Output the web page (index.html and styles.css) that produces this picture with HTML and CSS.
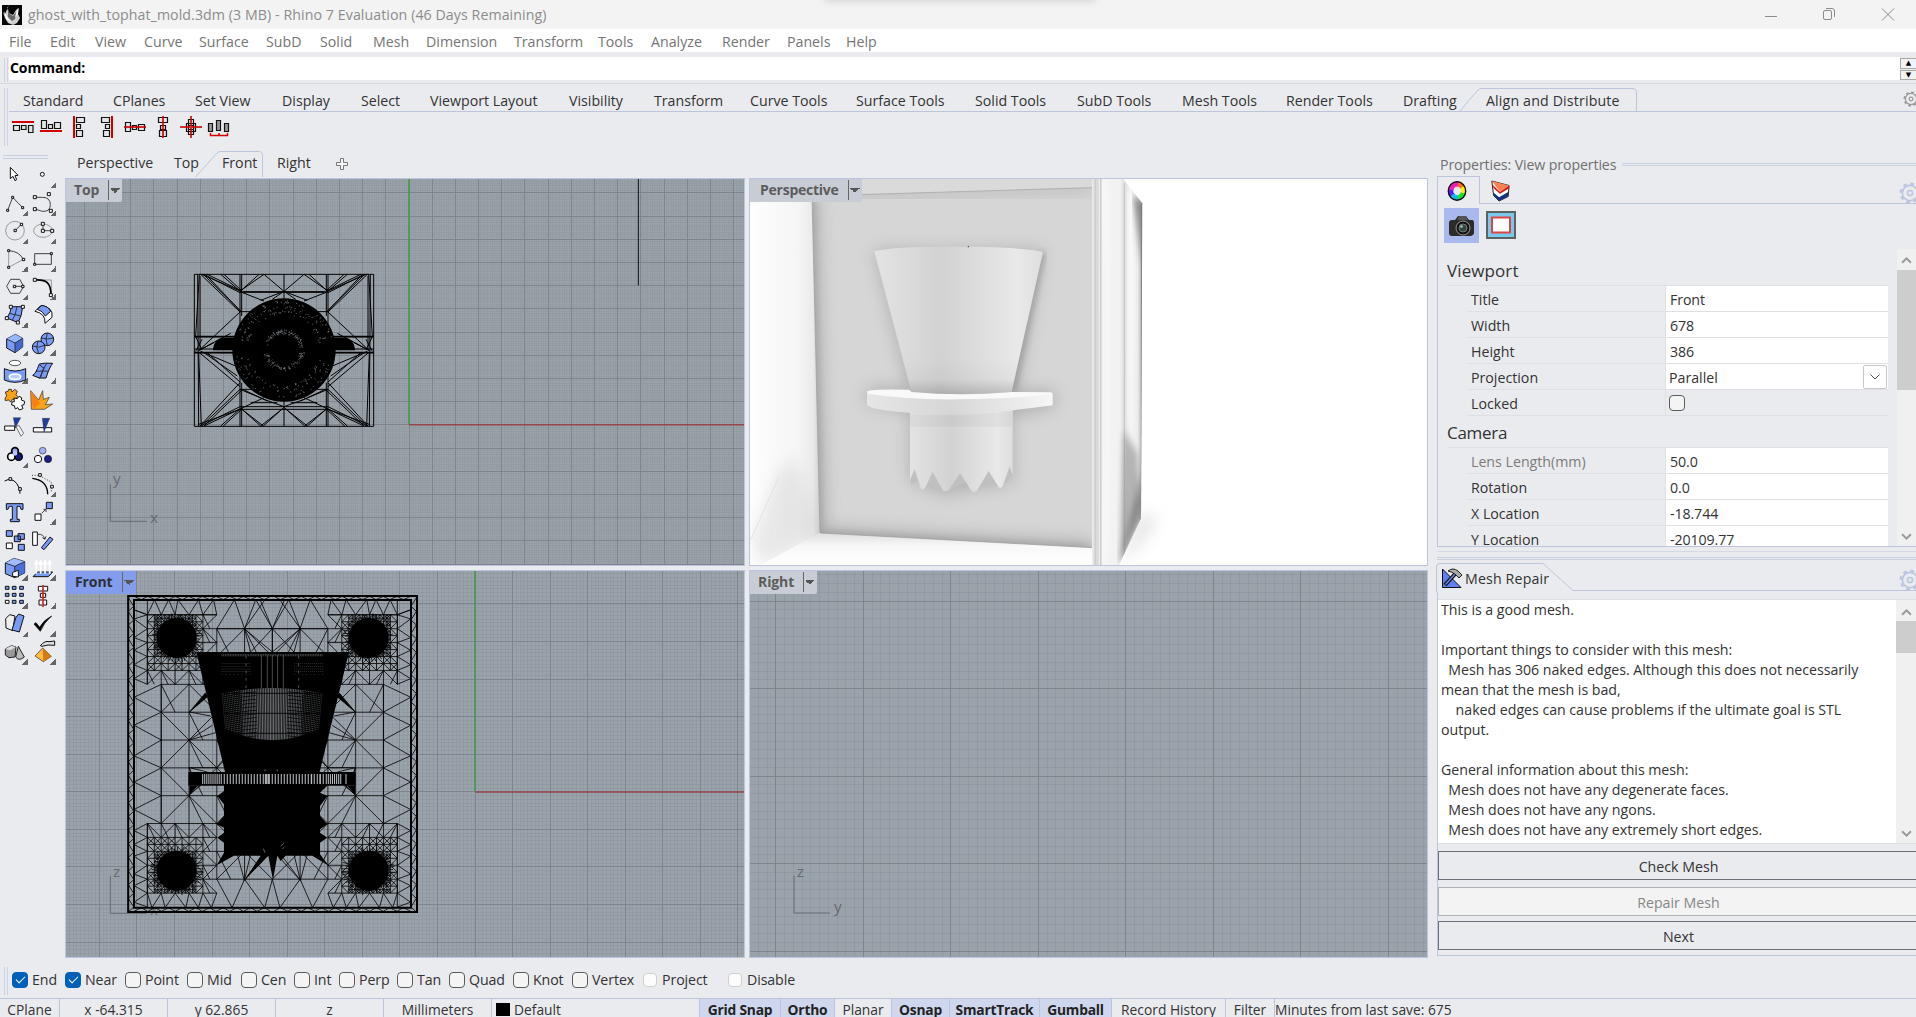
FILE: index.html
```html
<!DOCTYPE html>
<html lang="en">
<head>
<meta charset="utf-8">
<title>ghost_with_tophat_mold.3dm</title>
<link rel="stylesheet" href="styles.css">
</head>
<body>
<header class="titlebar">
  <svg class="app-icon" viewBox="0 0 20 20"><rect width="20" height="20" fill="#050505"/><path d="M7 0l-2 3 2 5 4 2 3-5 3-2-1 6 2 4-3 5-4 2-5-2-3-5-2-6 2 2z" fill="#cfcfcf"/><path d="M6 4l2 5 3 2 3-4-1 7-3 2-4-4z" fill="#666"/><path d="M2 6l3 6 5 6-6-4zM16 3l0 6-3 3z" fill="#fff"/><path d="M12 0h5l-4 5z" fill="#050505"/></svg>
  <span class="title">ghost_with_tophat_mold.3dm (3 MB) - Rhino 7 Evaluation (46 Days Remaining)</span>
  <div class="notch"></div>
  <svg class="winctl" viewBox="0 0 146 29" fill="none" stroke="#8b8b8b"><path d="M5 16.500h12M122 8.500l12 12M134 8.500l-12 12"/><rect x="63.500" y="10.500" width="8" height="9" rx="1.500"/><path d="M66 8.500h6q2.500 0 2.500 2.500v6"/></svg>
</header>
<nav class="menu"><span>File</span><span>Edit</span><span>View</span><span>Curve</span><span>Surface</span><span>SubD</span><span>Solid</span><span>Mesh</span><span>Dimension</span><span>Transform</span><span>Tools</span><span>Analyze</span><span>Render</span><span>Panels</span><span>Help</span></nav>
<div class="command"><i class="grip"></i><div class="prompt">Command:</div>
  <div class="spin"><b>▲</b><b>▼</b></div></div>
<section class="toolbar">
  <i class="grip tall"></i>
  <div class="tb-main">
    <div class="tb-tabs"><span>Standard</span><span>CPlanes</span><span>Set View</span><span>Display</span><span>Select</span><span>Viewport Layout</span><span>Visibility</span><span>Transform</span><span>Curve Tools</span><span>Surface Tools</span><span>Solid Tools</span><span>SubD Tools</span><span>Mesh Tools</span><span>Render Tools</span><span>Drafting</span><span class="active"><svg viewBox="0 0 178 25" fill="none" stroke="#bcc5dc"><path d="M0 24L19 2Q20.500 .5 23 .5H174Q177.500 .5 177.500 4V24"/></svg>Align and Distribute</span>
      <svg class="gear" viewBox="0 0 20 20"><use href="#gear"/></svg></div>
    <div class="tb-icons">
      <svg viewBox="11 115 28 24"><path class="rd" d="M12 122h22"/><path class="bx" d="M13.500 125.500h6v5h-6zM21.500 125.500h4.500v4h-4.500zM28.500 125.500h4.500v7h-4.500z"/></svg>
      <svg viewBox="39 115 28 24"><path class="rd" d="M40 131h22"/><path class="bx" d="M41.500 120.500h5v8h-5zM48.500 124.500h4v4h-4zM54.500 122.500h6v6h-6z"/></svg>
      <svg viewBox="67 115 28 24"><path class="rd" d="M74 116v22"/><path class="bx" d="M76.500 117.500h8v5h-8zM76.500 124.500h4v4h-4zM76.500 130.500h6v6h-6z"/></svg>
      <svg viewBox="95 115 28 24"><path class="rd" d="M112 116v22"/><path class="bx" d="M101.500 117.500h8v5h-8zM105.500 124.500h4v4h-4zM103.500 130.500h6v6h-6z"/></svg>
      <svg viewBox="123 115 28 24"><path class="bx" d="M125.500 122.500h5v9h-5zM132.500 125.500h4v4h-4zM138.500 124.500h6v6h-6z"/><path class="rd o" d="M124 127h22"/></svg>
      <svg viewBox="151 115 28 24"><path class="bx" d="M158.500 117.500h9v5h-9zM160.500 125.500h5v4h-5zM159.500 130.500h7v6h-7z"/><path class="rd o" d="M163 116v22"/></svg>
      <svg viewBox="179 115 28 24"><path class="bx" d="M188.500 119.500h5v15h-5zM186.500 123.500h9v8h-9zM188.500 125.500h5v4h-5z"/><path class="rd o" d="M180 127h22M191 116v22"/></svg>
      <svg viewBox="207 115 28 24"><path class="bx g" d="M208.500 123.500h4v8h-4zM216.500 120.500h4v10h-4zM224.500 123.500h4v8h-4z"/><path d="M210.500 133v2.500h17v-2.500M219 133v2" stroke="#d00000" stroke-width="1.500" fill="none"/></svg>
    </div>
  </div>
</section>
<main class="work">
  <aside class="palette">
    <div class="hgrip"></div>
    <div class="tools">
      <svg class="t" viewBox="3 30 84 84"><path d="M31 52v34l8-7 6 13 5-3-5-12 9-1z" class="w"/></svg>
      <svg class="t f" viewBox="87 30 84 84"><circle cx="127" cy="73" r="6" class="w"/></svg>
      <svg class="t f" viewBox="3 114 84 84"><path d="M23 181L38 142 68 173" class="l"/><path d="M20 178h6v6h-6zM35 139h6v6h-6zM65 170h6v6h-6z" class="w"/></svg>
      <svg class="t f" viewBox="87 114 84 84"><path d="M105 142h22q24 0 24 22t-24 20l-22-7" class="l"/><path d="M100 137h9v9h-9zM142 128h9v9h-9zM100 173h9v9h-9zM148 178h9v9h-9z" class="w"/></svg>
      <svg class="t f" viewBox="3 198 84 84"><circle cx="45" cy="242" r="28" class="l g"/><path d="M45 242l19-19" class="l"/><path d="M42 238h7v7h-7zM61 220h7v7h-7z" class="w"/></svg>
      <svg class="t f" viewBox="87 198 84 84"><ellipse cx="129" cy="242" rx="28" ry="20" class="l g"/><path d="M129 222v20h26" class="l"/><path d="M124 217h9v9h-9zM124 238h9v9h-9zM152 238h9v9h-9z" class="w"/></svg>
      <svg class="t f" viewBox="3 282 84 84"><path d="M26 302q32 2 44 26" class="l"/><path d="M26 302v50l44-24" class="l g"/><path d="M23 299h6v6h-6zM23 349h6v6h-6zM67 325h7v7h-7z" class="w"/></svg>
      <svg class="t f" viewBox="87 282 84 84"><path d="M104 311h50v32h-50z" class="l"/><path d="M151 308h6v6h-6zM101 340h6v6h-6z" class="w"/></svg>
      <svg class="t f" viewBox="3 366 84 84"><path d="M20 409l12-21h27l12 21-12 21H32z" class="l"/><path d="M43 409h25" class="l"/><path d="M40 406h7v7h-7zM65 406h7v7h-7z" class="w"/></svg>
      <svg class="t f" viewBox="87 366 84 84"><path d="M105 390h49v46" class="l g"/><path d="M105 390c36-2 48 10 48 46" fill="none" stroke="#000" stroke-width="5"/><path d="M100 385h9v9h-9zM148 431h9v9h-9z" class="w"/></svg>
      <svg class="t f" viewBox="3 450 84 84"><path d="M34 470h34q-2 28-14 48L21 504q12-18 13-34z" class="b"/><path d="M51 470q-4 26-14 41M27 490l36 8" class="l"/><path d="M28 466h9v9h-9zM64 466h9v9h-9zM16 500h9v9h-9zM49 513h9v9h-9z" class="w"/></svg>
      <svg class="t f" viewBox="87 450 84 84"><path d="M105 484l18-18q38 6 33 36l-21 18q2-30-30-36z" class="w"/><path d="M112 478l14-12q20 4 26 18l-16 14q-8-16-24-20z" class="b"/></svg>
      <svg class="t f" viewBox="3 534 84 84"><path d="M20 567l26-14 22 12v26l-23 17-25-14z" class="b"/><path d="M20 567l25 12 23-14-22-12z" fill="#98b6ff"/><path d="M45 579l23-14v26l-23 17z" fill="#4468cc"/><path d="M20 567l25 12 23-14M45 579v29" class="l"/></svg>
      <svg class="t f" viewBox="87 534 84 84"><circle cx="142" cy="568" r="19" class="b"/><circle cx="116" cy="592" r="19" class="b"/><path d="M98 588q18 8 36-2M114 573q-8 18 2 38M124 564q18 6 36 0M142 549q-8 18 0 38" class="l" stroke-width="2"/></svg>
      <svg class="t f" viewBox="3 618 84 84"><ellipse cx="45" cy="639" rx="17" ry="8" fill="#fff" stroke="#555" stroke-width="3"/><path d="M13 656q32 14 64 0v34q-32 14-64 0z" class="b"/><ellipse cx="45" cy="680" rx="17" ry="8" fill="#b8ccff" stroke="#fff" stroke-width="5"/></svg>
      <svg class="t f" viewBox="87 618 84 84"><path d="M98 676q8-2 20-34 16-4 40-2-10 12-20 44-20 4-40-8z" class="b"/><path d="M118 642q4 8 14 12l-14 32M108 664q24-2 38 0M140 640q-14 20-18 42" class="l" stroke-width="2"/></svg>
      <svg class="t" viewBox="3 702 84 84"><path d="M16 726l8-2 2-6 8 0 2 8 8-8 8 6-4 10 5 6-8 10-8-2-4 8-8-6-9 2-1-8 5-6z" fill="#f4a11c" stroke="#000" stroke-width="2"/><path d="M42 744l10 2 5-7 8 4-1 7 10 4-2 10-7 2 4 10-11 4-5-7-7 4-3-10-8-2 1-9 7-1z" class="w"/></svg>
      <svg class="t" viewBox="87 702 84 84"><path d="M92 722l24 28 12-28 2 26 18-6-12 22 22-2-24 16H94z" fill="#f5a31c" stroke="#333" stroke-width="2"/><path d="M92 722l8 56 20-18z" fill="#fb7f11"/></svg>
      <svg class="t" viewBox="3 36 84 84"><path d="M14 78h30v13H14z" class="w"/><path d="M40 53h22L46 84z" fill="#1f3f9c" stroke="#111"/><path d="M48 80l9-4 14 24-8 9z" fill="#eee" stroke="#777" stroke-width="3"/></svg>
      <svg class="t" viewBox="87 36 84 84"><path d="M100 83h55v13h-55z" class="w"/><path d="M127 55h22l-17 41z" fill="#1f3f9c" stroke="#111"/></svg>
      <svg class="t f" viewBox="3 120 84 84"><circle cx="45" cy="153" r="10" fill="#9aa8f0" stroke="#000" stroke-width="5"/><circle cx="34" cy="170" r="11" fill="#fff" stroke="#000" stroke-width="5"/><circle cx="56" cy="170" r="11" fill="#171a78" stroke="#000" stroke-width="4"/><circle cx="45" cy="160" r="7" fill="#b9c5ff"/></svg>
      <svg class="t" viewBox="87 120 84 84"><circle cx="128" cy="152" r="10" fill="#a5b1f5" stroke="#333" stroke-width="2"/><circle cx="114" cy="177" r="11" class="w"/><circle cx="144" cy="177" r="11" fill="#1b1f86" stroke="#222" stroke-width="2"/></svg>
      <svg class="t" viewBox="3 204 84 84"><path d="M14 240q20-12 36 7 12 16 10 31" fill="none" stroke="#000" stroke-width="3"/><path d="M27 230h8v8h-8zM56 260h8v8h-8z" class="w"/></svg>
      <svg class="t f" viewBox="87 204 84 84"><path d="M97 232q46 6 46 48" fill="none" stroke="#000" stroke-width="4"/><path d="M96 223h20l38 20v28" class="l" stroke-dasharray="3 5"/><path d="M116 218h8v8h-8zM152 253h8v8h-8z" class="w"/></svg>
      <svg class="t" viewBox="3 288 84 84"><path d="M19 308h50v17h-6l-3-9h-9v39h7v7H31v-7h6v-39h-9l-4 9h-5z" class="b"/></svg>
      <svg class="t f" viewBox="87 288 84 84"><path d="M105 339h18v19h-18z" class="w"/><path d="M139 304h18v19h-18z" class="b"/><path d="M125 337l12-12M130 325h8v8" class="l"/></svg>
      <svg class="t" viewBox="3 372 84 84"><path d="M19 389h18v17H19zM54 398h19v17H54zM43 405h18v17H43zM55 430h18v18H55z" class="b"/><path d="M19 426h18v17H19z" class="w"/></svg>
      <svg class="t" viewBox="87 372 84 84"><path d="M98 393h14v40H98z" class="w"/><path d="M124 440l26-32 9 7-27 31z" class="b"/><path d="M114 400q16-2 20 14M127 410l8 5 3-9" class="l"/></svg>
      <svg class="t f" viewBox="3 456 84 84"><path d="M16 486l26-14 32 10v34l-30 14-28-12z" class="b"/><path d="M16 486l26-14 32 10-30 14z" fill="#a0bcff"/><path d="M44 496l30-14v34l-30 14z" fill="#4a70d6"/><path d="M16 486l28 10 30-14M44 496v34" class="l"/><path d="M38 514l17-6v20l-17-2z" class="w"/></svg>
      <svg class="t f" viewBox="87 456 84 84"><path d="M99 527l14-14h45l-13 14z" class="b"/><path d="M109 518v-32M122 518v-32M135 518v-32M149 518v-32M104 490l5-9 5 9M117 490l5-9 5 9M130 490l5-9 5 9M144 490l5-9 5 9" stroke="#fff" stroke-width="5" fill="none"/></svg>
      <svg class="t f" viewBox="3 540 84 84"><path d="M16 556h11v9H16zM37 556h11v9H37zM59 556h11v9H59zM16 577h11v9H16zM37 577h11v9H37zM59 577h11v9H59zM37 598h11v9H37zM59 598h11v9H59z" class="b"/><path d="M16 598h11v9H16z" class="w"/></svg>
      <svg class="t f" viewBox="87 540 84 84"><path d="M115 556h28v14h-28zM121 577h16v12h-16zM117 597h23v15h-23z" class="w"/><path d="M129 552v66" stroke="#d22" stroke-width="5"/></svg>
      <svg class="t f" viewBox="3 624 84 84"><path d="M17 653l12-12 16 4-7 44-20-8z" fill="#eee" stroke="#111" stroke-width="3"/><path d="M48 649l8-10 16 6-14 48-22-6z" class="b"/></svg>
      <svg class="t f" viewBox="87 624 84 84"><path d="M102 669l6-4 11 14q12-22 36-34-24 20-34 46z" fill="#000" stroke="#000" stroke-width="2"/></svg>
      <svg class="t f" viewBox="3 708 84 84"><path d="M16 744l18-10 14 4-3 30-18 2-11-8z" fill="#999" stroke="#222" stroke-width="3"/><path d="M16 744l15 4 17-10-14-4z" fill="#ddd"/><path d="M55 736l18 32q-16 14-26 0z" fill="#bbb" stroke="#222" stroke-width="3"/></svg>
      <svg class="t f" viewBox="87 708 84 84"><path d="M105 765l23-24 26 25-24 16z" fill="#ffbd45" stroke="#222" stroke-width="2"/><path d="M128 741l26 25-24 16z" fill="#d67b12"/><path d="M121 734q14-16 26-12l17-2v13l-20-1-18 4z" fill="#ddd" stroke="#111" stroke-width="3"/></svg>
    </div>
  </aside>
  <section class="views">
    <div class="vtabs"><span>Perspective</span><span>Top</span><span class="sel"><svg viewBox="0 0 68 28" fill="none" stroke="#bcc5dc"><path d="M.5 26L22 2Q23 .5 26 .5H64Q67.500 .5 67.500 4V26"/></svg>Front</span><span>Right</span><svg class="plus" viewBox="0 0 12 12"><path d="M4.500 .5h3v4h4v3h-4v4h-3v-4h-4v-3h4z" fill="#f6f6f6" stroke="#777"/></svg></div>
    <div class="vgrid">
      <div class="vp"><svg id="vTop" viewBox="6 9 2034 1158" preserveAspectRatio="none"></svg><div class="vlabel">Top<i></i></div></div>
      <div class="vp persp">
        <svg viewBox="18 27 2031 1158" preserveAspectRatio="none">
          <defs>
            <linearGradient id="hat"><stop offset="0" stop-color="#e3e3e3"/><stop offset=".4" stop-color="#d2d2d2"/><stop offset=".85" stop-color="#e9e9e9"/><stop offset="1" stop-color="#dedede"/></linearGradient>
            <linearGradient id="brim"><stop offset="0" stop-color="#e6e6e6"/><stop offset=".45" stop-color="#d6d6d6"/><stop offset="1" stop-color="#f6f6f6"/></linearGradient>
            <linearGradient id="lw"><stop offset="0" stop-color="#fefefe"/><stop offset=".7" stop-color="#f5f5f5"/><stop offset=".9" stop-color="#eaeaea"/><stop offset="1" stop-color="#cfcfcf"/></linearGradient>
            <linearGradient id="sd"><stop offset="0" stop-color="#f4f4f4"/><stop offset=".55" stop-color="#f2f2f2"/><stop offset=".64" stop-color="#dedede"/><stop offset=".75" stop-color="#f2f2f2"/><stop offset=".9" stop-color="#ededed"/><stop offset="1" stop-color="#b5b5b5"/></linearGradient>
            <linearGradient id="fl" x1="0" y1="0" x2="0" y2="1"><stop offset="0" stop-color="#dedede"/><stop offset=".4" stop-color="#f8f8f8"/><stop offset="1" stop-color="#fff"/></linearGradient>
            <linearGradient id="dk" x1="0" y1="0" x2="0" y2="1"><stop offset="0" stop-color="#000" stop-opacity="0"/><stop offset=".6" stop-color="#000" stop-opacity=".03"/><stop offset="1" stop-color="#000" stop-opacity=".18"/></linearGradient>
            <filter id="b8"><feGaussianBlur stdDeviation="9"/></filter><filter id="b20" x="-.3" y="-.3" width="1.600" height="1.600"><feGaussianBlur stdDeviation="24"/></filter>
            <clipPath id="wall"><path d="M204 78L1045 52V1133L228 1089z"/></clipPath>
            <clipPath id="flank"><path d="M1073 27H1138L1195 100 1191 1045 1125 1185H1073z"/></clipPath>
          </defs>
          <rect x="18" y="27" width="2031" height="1158" fill="#fff"/>
          <path d="M18 27H1045V54L204 80z" fill="#dadada"/>
          <path d="M18 27L204 80 228 1089 50 1185H18z" fill="url(#lw)"/>
          <path d="M20 1110L110 890 160 870 228 1089 50 1185z" fill="#aaa" opacity=".22" filter="url(#b20)"/>
          <path d="M20 1110L105 920" stroke="#e2e2e2" stroke-width="3"/>
          <path d="M228 1089L1045 1133V1185H50z" fill="url(#fl)"/>
          <path d="M204 78L1045 52V1133L228 1089z" fill="#d6d6d6"/>
          <g clip-path="url(#wall)">
            <path d="M204 75L228 1089 1045 1133" fill="none" stroke="#777" stroke-width="36" opacity=".42" filter="url(#b20)"/>
            <path d="M204 75L228 1089 1045 1133" fill="none" stroke="#777" stroke-width="12" opacity=".5" filter="url(#b8)"/>
            <path d="M204 78L1045 52" stroke="#777" stroke-width="16" opacity=".5" filter="url(#b20)"/>
            <path d="M391 240L896 240 820 660H930V712L806 740V935L600 975 498 930V730L369 700V655L490 650z" fill="#777" opacity=".38" filter="url(#b20)"/>
            <path d="M898 246L806 665" stroke="#555" stroke-width="9" opacity=".6" filter="url(#b8)"/>
          </g>
          <path d="M204 78L228 1089 1045 1133" fill="none" stroke="#999" stroke-width="2"/><path d="M204 78L1045 53" stroke="#a2a2a2" stroke-width="2"/>
          <path d="M501 720V945L522 930 565 950 612 965 660 940 720 940 770 950 806 915V720z" fill="#c0c0c0"/>
          <path d="M498 720V930L512 897 530 955Q538 963 545 950L566 906 598 963H612L648 909 682 962Q692 970 700 960L734 903 764 952Q772 956 776 948L797 890 806 915V715z" fill="url(#hat)"/>
          <path d="M391 244Q430 232 560 230Q820 228 897 246L803 665Q650 682 502 665z" fill="url(#hat)"/>
          <path d="M476 560L828 560 803 665Q650 682 502 665z" fill="url(#dk)"/>
          <path d="M369 664Q385 656 495 659L503 666Q650 680 803 666L920 667Q926 668 926 675L870 700 520 705 372 680z" fill="#f9f9f9"/>
          <path d="M369 671Q500 690 640 688 830 686 926 671V706Q800 724 680 730 480 736 385 714L369 706z" fill="url(#brim)"/>
          <path d="M498 732Q650 742 804 722V770H498z" fill="#000" opacity=".035"/>
          <circle cx="673" cy="230" r="2" fill="#333"/>
          <path d="M1192 1030L1240 1040 1200 1110 1125 1185z" fill="#999" opacity=".28" filter="url(#b20)"/>
          <path d="M1045 27H1138L1195 100 1191 1045 1125 1185H1045z" fill="url(#sd)"/>
          <path d="M1045 27h28v1158h-28z" fill="#dadada"/><path d="M1047 27V1185M1066 27V1185" stroke="#f0f0f0" stroke-width="3"/><path d="M1070 27V1185M1054 27V1185" stroke="#c4c4c4" stroke-width="2"/>
          <g clip-path="url(#flank)">
            <path d="M1078 27Q1110 500 1078 1185" stroke="#fff" stroke-width="10" fill="none" opacity=".8" filter="url(#b8)"/>
            <path d="M1141 40V1160" stroke="#bdbdbd" stroke-width="3" opacity=".8"/>
            <path d="M1153 60L1172 75 1162 700 1168 900 1150 700z" fill="#fff" opacity=".8" filter="url(#b8)"/>
            <path d="M1168 70L1195 100V290z" fill="#555" opacity=".75" filter="url(#b8)"/>
            <path d="M1140 780L1180 850 1195 1000 1127 1190z" fill="#777" opacity=".5" filter="url(#b8)"/>
            <path d="M1195 910V1045L1127 1185 1165 1020z" fill="#555" opacity=".5" filter="url(#b8)"/>
            <path d="M1193 100V1040" stroke="#777" stroke-width="5" opacity=".8"/>
          </g>
        </svg>
        <div class="vlabel">Perspective<i></i></div></div>
      <div class="vp"><svg id="vFront" viewBox="6 15 2034 1158" preserveAspectRatio="none"></svg><div class="vlabel on">Front<i></i></div></div>
      <div class="vp"><svg id="vRight" viewBox="0 0 2031 1158" preserveAspectRatio="none"></svg><div class="vlabel">Right<i></i></div></div>
    </div>
  </section>
  <aside class="side">
    <div class="phead">Properties: View properties<i></i></div>
    <div class="ptabs">
      <div class="pt on"><svg viewBox="0 0 20 22"><g fill="none" stroke-width="5"><path d="M10 4A6.500 7 0 0 1 16 8" stroke="#ff6a1c"/><path d="M15.500 7A6.500 7 0 0 1 16 14" stroke="#f4f000"/><path d="M16 13A6.500 7 0 0 1 10 18" stroke="#1ee32a"/><path d="M11 18A6.500 7 0 0 1 5 14" stroke="#12b9ef"/><path d="M5 15A6.500 7 0 0 1 4 9" stroke="#5323ef"/><path d="M4 10A6.500 7 0 0 1 11 4" stroke="#ef1eba"/></g><ellipse cx="10" cy="11" rx="8.700" ry="9.200" fill="none" stroke="#111" stroke-width="1.400"/></svg></div>
      <div class="pt"><svg viewBox="0 0 22 24"><path d="M2 1l19 5-1 12-10 5-6-6z" fill="#fff" stroke="#111"/><path d="M2 1l19 5-10 7z" fill="#ff8050"/><path d="M3 5l8 8 10-7v3l-10 6-7-6z" fill="#d31616"/><path d="M4 14l6 5 10-6v5l-10 5-6-6z" fill="#15327f"/></svg></div>
      <svg class="gear big" viewBox="0 0 20 20"><use href="#gear"/></svg>
    </div>
    <div class="pbody">
      <div class="pbtns">
        <div class="pb on"><svg viewBox="0 0 26 24"><path d="M1 9q0-3 3-3h3l3-4h8l3 4h3q2 0 2 3v10q0 2-3 3H4q-3 0-3-3z" fill="#2b2b2b"/><path d="M11 2h7l2 4H9z" fill="#555"/><circle cx="15" cy="14" r="7" fill="#111" stroke="#999"/><circle cx="15" cy="14" r="4" fill="#33463c" stroke="#777"/><circle cx="13.500" cy="12.500" r="1.300" fill="#9cc"/></svg></div>
        <div class="pb"><svg viewBox="0 0 30 28"><rect x="1" y="1" width="28" height="26" fill="#7cc8ec" stroke="#5b625f" stroke-width="2"/><rect x="6" y="6.500" width="18" height="15" fill="#fff" stroke="#dd4545" stroke-width="2"/></svg></div>
      </div>
      <div class="plist">
        <div class="ptable">
          <h3>Viewport</h3>
          <div class="row"><span>Title</span><b>Front</b></div>
          <div class="row"><span>Width</span><b>678</b></div>
          <div class="row"><span>Height</span><b>386</b></div>
          <div class="row"><span>Projection</span><b class="dd">Parallel<em><svg viewBox="0 0 10 6"><path d="M.5 .5L5 5 9.500 .5" fill="none" stroke="#555"/></svg></em></b></div>
          <div class="row"><span>Locked</span><b class="clear"><i class="cb"></i></b></div>
          <h3 class="cam">Camera</h3>
          <div class="row"><span class="dim">Lens Length(mm)</span><b>50.0</b></div>
          <div class="row"><span>Rotation</span><b>0.0</b></div>
          <div class="row"><span>X Location</span><b>-18.744</b></div>
          <div class="row"><span>Y Location</span><b>-20109.77</b></div>
        </div>
        <div class="sb s1"><svg viewBox="0 0 10 7"><path d="M1 6l4-4 4 4"/></svg><i></i><svg viewBox="0 0 10 7"><path d="M1 1l4 4 4-4"/></svg></div>
      </div>
    </div>
    <div class="splitter"></div>
    <div class="mtab"><svg class="edge" viewBox="0 0 480 29" fill="none" stroke="#bcc5dc"><path d="M.5 29V4Q.5 .5 4 .5H107L137 27.500H480"/></svg><svg class="mi" viewBox="0 0 20 20"><path d="M.5 1L19 19.500H.5z" fill="#5f7ff0" stroke="#111"/><path d="M3 17L14 5" stroke="#111" stroke-width="4"/><path d="M3.500 16.500L13 6" stroke="#6b87dd" stroke-width="1.500"/><path d="M6 3q5-4 10 0l4 4-3 3-4-4q-3-2-7-3z" fill="#aaa" stroke="#222"/></svg><span>Mesh Repair</span><svg class="gear big" viewBox="0 0 20 20"><use href="#gear"/></svg></div>
    <div class="mbody">
      <div class="report"><pre>This is a good mesh.

Important things to consider with this mesh:
  Mesh has 306 naked edges. Although this does not necessarily
mean that the mesh is bad,
    naked edges can cause problems if the ultimate goal is STL
output.

General information about this mesh:
  Mesh does not have any degenerate faces.
  Mesh does not have any ngons.
  Mesh does not have any extremely short edges.</pre>
        <div class="sb s2"><svg viewBox="0 0 10 7"><path d="M1 6l4-4 4 4"/></svg><i></i><svg viewBox="0 0 10 7"><path d="M1 1l4 4 4-4"/></svg></div></div>
      <div class="btn">Check Mesh</div><div class="btn off">Repair Mesh</div><div class="btn last">Next</div>
    </div>
  </aside>
</main>
<div class="osnap"><i class="grip"></i>
  <div class="osn"><label><i class="cb ck"></i>End</label><label><i class="cb ck"></i>Near</label><label><i class="cb"></i>Point</label><label><i class="cb"></i>Mid</label><label><i class="cb"></i>Cen</label><label><i class="cb"></i>Int</label><label><i class="cb"></i>Perp</label><label><i class="cb"></i>Tan</label><label><i class="cb"></i>Quad</label><label><i class="cb"></i>Knot</label><label><i class="cb"></i>Vertex</label><label><i class="cb lite"></i>Project</label><label><i class="cb lite"></i>Disable</label></div>
</div>
<footer class="status"><span>CPlane</span><span>x -64.315</span><span>y 62.865</span><span>z</span><span>Millimeters</span><span class="layer"><i></i>Default</span><span class="on">Grid Snap</span><span class="on">Ortho</span><span>Planar</span><span class="on">Osnap</span><span class="on">SmartTrack</span><span class="on">Gumball</span><span>Record History</span><span>Filter</span><span class="left">Minutes from last save: 675</span></footer>
<svg width="0" height="0" class="defs"><symbol id="gear" viewBox="0 0 20 20"><circle cx="10" cy="10" r="8.500" fill="none" stroke="currentColor" stroke-width="2" stroke-dasharray="3.400 3.270"/><circle cx="10" cy="10" r="7" fill="none" stroke="currentColor" stroke-width="1.500"/><circle cx="10" cy="10" r="2.300" fill="none" stroke="currentColor" stroke-width="1.500"/></symbol></svg>
<script src="viewports.js"></script>
</body>
</html>
```
FILE: styles.css
```css
* { box-sizing: border-box; }
body { margin: 0; width: 1916px; height: 1017px; overflow: hidden; background: #eaebef; color: #333; font: 14.2px/20px "Open Sans", "Noto Sans", sans-serif; display: flex; flex-direction: column; white-space: nowrap; }
body > * { min-height: 0; }
svg { display: block; }
.defs { position: absolute; }
.titlebar { flex: 0 0 29px; background: #f3f3f3; display: flex; align-items: center; color: #8c8c8c; position: relative; overflow: hidden; }
.app-icon { width: 20px; height: 20px; margin: 0 6px 0 2px; }
.title { flex: 1; letter-spacing: .07px; }
.notch { position: absolute; left: 825px; top: -10px; width: 270px; height: 10px; box-shadow: 0 0 9px #c8c8c8; }
.winctl { width: 146px; height: 29px; margin-right: 10px; }
.menu { flex: 0 0 23px; padding-left: 9px; background: #fff; color: #757575; display: grid; grid-template-columns: 41px 45px 49px 55px 67px 54px 53px 53px 88px 84px 53px 71px 65px 59px 60px; line-height: 25px; }
.command { flex: 0 0 32px; margin-top: 5px; display: flex; align-items: flex-start; box-shadow: inset 0 -5px #eaebef, inset 0 -6px #d3d6e1; height: 32px; }
.grip { width: 4px; height: 24px; margin: 1px 0 0 4px; border: solid #cdd3e2; border-width: 0 1px; flex: none; }
.prompt { flex: 1; margin-left: 1px; height: 23px; background: #fff; color: #000; font-weight: 700; padding-left: 1px; line-height: 22px; font-size: 14px; letter-spacing: -.05px; }
.spin { width: 16px; padding: 1px 0 0; display: grid; gap: 1px; height: 23px; }
.spin b { border: 1px solid #aaa; border-right: 0; color: #000; font: 7px/8px "DejaVu Sans", sans-serif; text-align: center; background: #f3f3f3; }
.toolbar { flex: 0 0 57px; display: flex; margin-top: -1px; }
.grip.tall { height: 58px; margin-top: 0; }
.tb-main { flex: 1; margin-left: 1px; }
.tb-tabs { height: 24px; border-bottom: 1px solid #bcc5dc; padding-left: 14px; display: grid; grid-template-columns: 90px 82px 87px 79px 69px 139px 85px 96px 106px 119px 102px 105px 104px 117px 83px 407px 20px; line-height: 25px; }
.tb-tabs .active { position: relative; letter-spacing: .15px; }
.active svg { position: absolute; left: -27px; top: 0; width: 178px; height: 25px; }
.gear { width: 16px; height: 16px; margin-top: 3px; color: #9b9b9b; margin-left: 10px; }
.tb-icons { display: flex; height: 24px; margin: 3px 0 0 2px; }
.tb-icons svg { width: 28px; height: 24px; }
.rd { stroke: #d00000; stroke-width: 2; }
.rd.o { opacity: .8; }
.bx { fill: #e5e5e5; stroke: #111; stroke-width: 1.2; }
.bx.g { fill: #999; }
.work { flex: 1; display: flex; margin-top: 6px; }
.palette { width: 65px; }
.hgrip { width: 45px; height: 4px; margin: 4px 0 0 3px; border: solid #c8d1e1; border-width: 1px 0; }
.tools { margin: 1px 0 0 1px; display: grid; grid-template-columns: 28px 28px; grid-auto-rows: 28.050px; }
.t { width: 28px; height: 28px; }
.t.f { background: linear-gradient(135deg, #0000 50%, #666 50%) right 1px bottom 0 / 6px 6px no-repeat; }
.w { fill: #fff; stroke: #111; stroke-width: 3; }
.l { fill: none; stroke: #222; stroke-width: 2.5; }
.l.g { stroke: #888; }
.b { fill: #7a9bf5; stroke: #111; stroke-width: 3; }
.views { width: 1363px; margin-right: 8px; }
.vtabs { height: 28px; padding-left: 12px; display: grid; grid-template-columns: 97px 48px 55px 59px 20px; line-height: 24px; }
.vtabs .sel { position: relative; }
.sel svg { position: absolute; left: -27px; top: 0; width: 68px; height: 28px; }
.plus { width: 12px; height: 12px; margin: 7px 0; }
.vgrid { display: grid; grid-template-columns: 680px 679px; grid-template-rows: 388px 388px; gap: 4px; margin-top: -1px; }
.vp { border: 1px solid #bcc5dc; background: #9ba3aa; position: relative; overflow: hidden; }
.vp > svg { width: 100%; height: 100%; }
.vlabel { position: absolute; left: 0; top: 0; height: 23px; line-height: 21px; padding-left: 8px; background: #c8cdd5; color: #5c5c5c; font-weight: 700; font-size: 14px; letter-spacing: -.1px; display: flex; border-radius: 0 0 2px 0; }
.persp .vlabel { padding-left: 10px; letter-spacing: -.25px; }
.vlabel i { width: 14px; height: 20px; margin: 1px 0 0 9px; border-left: 1px solid #666; background: linear-gradient(to bottom right, #0000 50%, #0000 50%), linear-gradient(to bottom left, #555 50%, #0000 50%) 1px 8px / 5px 5px no-repeat, linear-gradient(to bottom right, #555 50%, #0000 50%) 6px 8px / 5px 5px no-repeat; }
.vlabel.on { background: #849cec; color: #2b303a; padding-left: 9px; }
.side { width: 480px; }
.phead { display: flex; align-items: center; height: 25px; padding: 2px 0 0 4px; color: #707070; letter-spacing: -.12px; }
.phead i { flex: 1; height: 3px; border: solid #cbd2e2; border-width: 1px 0; margin: 0 0 0 6px; }
.ptabs { height: 28px; display: flex; border-bottom: 1px solid #bcc5dc; margin-left: 1px; }
.pt { width: 43px; height: 28px; padding: 4px 0 0 10px; }
.pt.on { border: 1px solid #bcc5dc; border-bottom: 0; background: #eaebef; padding: 3px 9px; }
.pt svg { width: 20px; height: 22px; }
.gear.big { width: 22px; height: 22px; color: #bdc6de; margin: 6px -5px 0 auto; flex: none; }
.pbody { border: solid #bcc5dc; border-width: 0 0 1px 1px; margin-left: 1px; height: 343px; overflow: hidden; }
.pbtns { display: flex; padding: 4px 0 0 6px; gap: 7px; height: 45px; }
.pb { width: 30px; height: 35px; padding-top: 3px; }
.pb svg { width: 30px; height: 28px; }
.pb.on { width: 35px; background: #a9b9ed; padding: 6px 4px; }
.pb.on svg { width: 26px; height: 24px; }
.plist { display: flex; height: 298px; overflow: hidden; }
.ptable { flex: 1; padding: 8px 9px 0 9px; }
h3 { margin: 0; font-size: 17px; font-weight: 400; line-height: 28px; height: 29px; border-bottom: 1px solid #dfe0e6; color: #333; letter-spacing: .1px; }
.cam { height: 32px; line-height: 34px; letter-spacing: -.3px; }
.row { display: flex; height: 26px; line-height: 27px; margin-left: 20px; border-bottom: 1px solid #dfe0e6; }
.row span { width: 199px; padding-left: 4px; border-right: 1px solid #dfe0e6; }
.row .dim { color: #7b7b7b; }
.row b { flex: 1; background: #fff; font-weight: 400; padding-left: 4px; letter-spacing: -.1px; }
.row .clear { background: none; padding: 5px 3px; }
.row .dd { display: flex; justify-content: space-between; padding-left: 3px; letter-spacing: 0; }
.dd em { width: 24px; height: 24px; margin: 1px; border: 1px solid #c9c9c9; border-radius: 2px; padding: 8px 6px; }
.dd svg { width: 10px; height: 6px; }
.sb { background: #f0f0f0; display: flex; flex-direction: column; align-items: center; }
.sb svg { width: 11px; height: 8px; fill: none; stroke: #999; stroke-width: 1.8; }
.sb i { background: #cdcdcd; width: 100%; margin: 6px 0 auto; }
.s1 { width: 19px; padding: 7px 0 6px; }
.s1 i { height: 120px; }
.s2 { width: 20px; padding: 8px 0 5px; }
.s2 i { height: 32px; margin-top: 5px; }
.splitter { height: 13px; margin: 4px 0 0 1px; border-top: 1px solid #d5d9e4; background: linear-gradient(#c8d0e0, #c8d0e0) 0 5px / 100% 1px no-repeat, linear-gradient(#c8d0e0, #c8d0e0) 0 7px / 100% 1px no-repeat; }
.mtab { height: 29px; display: flex; position: relative; padding-left: 6px; margin: -1px 0 0; overflow: hidden; }
.edge { position: absolute; left: 0; top: 0; width: 480px; height: 29px; }
.mi { width: 20px; height: 20px; margin: 5px 3px 0 0; }
.mtab span { line-height: 31px; letter-spacing: .15px; }
.mbody { border: solid #bcc5dc; border-width: 0 0 1px 1px; margin-left: 1px; height: 364px; padding-top: 7px; }
.report { display: flex; height: 245px; border: solid #dcdee6; border-width: 1px 0; background: #fff; margin-bottom: 7px; }
pre { flex: 1; margin: 0; padding: 0 0 0 3px; font: inherit; overflow: hidden; letter-spacing: -.03px; }
.btn { height: 29px; border: 1px solid #6c6f7a; border-right: 0; text-align: center; line-height: 29px; margin-bottom: 7px; padding-left: 2px; }
.btn.off { color: #868686; background: #f3f3f3; border-color: #adb1b8; margin-bottom: 5px; }
.osnap { flex: 0 0 42px; display: flex; padding-top: 11px; }
.osnap .grip { height: 28px; margin-top: 0; }
.osn { margin-left: 4px; height: 28px; display: grid; grid-template-columns: 53px 60px 62px 54px 53px 45px 58px 52px 64px 59px 71px 85px 100px; }
label { display: flex; align-items: center; gap: 4px; height: 26px; letter-spacing: -.1px; }
.cb { display: block; width: 16px; height: 16px; border: 1px solid #5c5c5c; border-radius: 4px; background: #f4f4f4; flex: none; }
.ck { border-color: #005fb8; background: #005fb8; position: relative; }
.ck::after { content: ""; position: absolute; left: 3px; top: 3px; width: 8px; height: 4px; border: solid #fff; border-width: 0 0 1.500px 1.500px; transform: rotate(-45deg); }
.lite { width: 14px; height: 14px; margin: 0 1px 0 0; border-color: #cfcfcf; background: #fcfcfc; }
.status { flex: 0 0 19px; border-top: 1px solid #bcc5dc; display: grid; grid-template-columns: 60px 108px 108px 108px 108px 208px 81px 54px 57px 58px 90px 72px 114px 49px 1fr; text-align: center; line-height: 21px; overflow: hidden; font-size: 13.800px; }
.status span { border-right: 1px solid #bcc5dc; height: 22px; }
.status .on { background: #cfd7ee; font-weight: 700; color: #222; letter-spacing: -.2px; }
.status .left { text-align: left; border: 0; }
.status .layer { display: flex; text-align: left; padding-left: 4px; gap: 4px; }
.layer i { width: 14px; height: 13px; background: #000; margin-top: 4px; }
```
FILE: viewports.js
```js
var NS = 'http://www.w3.org/2000/svg';
function path(svg, d, stroke, width, extra) {
  var p = document.createElementNS(NS, 'path');
  p.setAttribute('d', d);
  p.setAttribute('fill', 'none');
  p.setAttribute('stroke', stroke);
  p.setAttribute('stroke-width', width);
  for (var k in extra || {}) p.setAttribute(k, extra[k]);
  svg.appendChild(p);
}
// Repeating construction grid through (ox, oy); three drawing units make one pixel.
function grid(svg, x0, y0, ox, oy, step, color, o) {
  var d = '', x, y, s;
  for (x = ox - Math.ceil((ox - x0) / step) * step; x < x0 + 2040; x += step) {
    s = x0 + Math.round((x - x0) / 3) * 3 + 1.5;
    d += 'M' + s + ' ' + y0 + 'v1160';
  }
  for (y = oy - Math.ceil((oy - y0) / step) * step; y < y0 + 1160; y += step) {
    s = y0 + Math.round((y - y0) / 3) * 3 + 1.5;
    d += 'M' + x0 + ' ' + s + 'h2036';
  }
  path(svg, d, color, 3, { opacity: o });
}
function fill(svg, d, color) { path(svg, d, 'none', 0, { fill: color }); }
function label(svg, x, y, t, size) {
  var e = document.createElementNS(NS, 'text');
  e.setAttribute('x', x); e.setAttribute('y', y); e.setAttribute('fill', '#666b70');
  e.setAttribute('font-size', size || 46); e.textContent = t; svg.appendChild(e);
}
function circle(cx, cy, r, ry) {
  ry = ry || r;
  return 'M' + (cx - r) + ' ' + cy + 'a' + r + ' ' + ry + ' 0 1 0 ' + 2 * r + ' 0a' + r + ' ' + ry + ' 0 1 0 ' + -2 * r + ' 0';
}
var seed = 7;
function rnd() { seed = (seed * 16807) % 2147483647; return seed / 2147483647; }

// Top view
var T = document.getElementById('vTop');
grid(T, 6, 9, 1033.5, 745, 6.96, '#8d959e', .42);
grid(T, 6, 9, 1033.5, 745, 69.6, '#7d828b', .9);
path(T, 'M1035 9V745', '#409a45', 4.5);
path(T, 'M1035 746H2040', '#96474a', 4.5);
path(T, 'M1723 9V328', '#111', 3);
path(T, 'M139 924V1036H249', '#666b70', 3);
label(T, 147, 923, 'y'); label(T, 258, 1040, 'x');
var half = [[391,295,391,751],[401,295,404,751],[406,295,395,480],[528,295,528,751],[533,295,533,420],[533,620,533,751],
 [413,295,528,345],[419,295,528,350],[410,295,528,408],[418,295,533,408],[425,295,528,404],[430,295,528,343],[470,295,528,345],[480,295,532,343],
 [600,295,528,345],[585,295,530,345],[600,295,660,346],[528,347,600,375],[660,346,590,373],[660,346,625,370],[528,408,404,524],[404,524,450,500],
 [391,482,520,482],[395,482,414,522],[395,526,414,490],[410,520,500,472],[391,530,520,530],[391,519,520,519],[410,526,515,570],[404,528,528,632],[420,530,520,600],[430,530,528,618],
 [408,750,528,620],[412,750,528,640],[420,750,536,640],[404,745,528,700],[410,750,528,692],[420,750,600,665],[470,750,530,697],[478,750,536,697],
 [530,697,598,750],[534,700,590,750],[598,750,660,694],[590,750,656,698],[528,692,660,692],[528,700,660,700],[528,347,660,347],[528,349,660,349],[528,640,600,670],[536,640,610,675],[560,680,640,680],[600,670,660,692],[528,407,570,407],[528,640,570,640],[408,300,408,520],[404,530,412,750],[391,295,660,295],[391,751,660,751]];
var d = '';
half.forEach(function (a) { d += 'M' + a[0] + ' ' + a[1] + 'L' + a[2] + ' ' + a[3] + 'M' + (1320 - a[0]) + ' ' + a[1] + 'L' + (1320 - a[2]) + ' ' + a[3]; });
d += 'M660 295V751';
path(T, d, '#000', 3);
path(T, 'M391 482H929M391 530H929', '#000', 5);
fill(T, circle(660, 522, 155), '#000');
fill(T, 'M447 523q2-36 34-38h358q32 2 34 38z', '#000');
d = '';
for (var i = 0; i < 420; i++) {
  var ring = [45, 50, 105, 120, 136][i % 5], a = rnd() * 6.283, r = ring + rnd() * 10;
  if (Math.abs(Math.sin(a)) < .12) continue;
  d += 'M' + (660 + r * Math.cos(a)).toFixed(1) + ' ' + (522 + r * Math.sin(a)).toFixed(1) + 'l' + (4 * Math.cos(a)).toFixed(1) + ' ' + (4 * Math.sin(a)).toFixed(1);
}
path(T, d, '#858c92', 2.4, { opacity: .8 });

// Front view
var F = document.getElementById('vFront');
grid(F, 6, 15, 1231.5, 676, 11.27, '#8b939c', .55);
grid(F, 6, 15, 1231.5, 676, 112.7, '#7d828b', .9);
path(F, 'M1233 15V676', '#409a45', 4.5);
path(F, 'M1234 678H2040', '#96474a', 4.5);
path(F, 'M139 930V1042H249', '#666b70', 3);
label(F, 147, 934, 'z'); label(F, 258, 1046, 'x');
path(F, 'M192.500 90H1059V1038H192.500zM210 102H1041V1025H210z', '#000', 6);
var pegs = [[338, 216], [338, 914]];
d = '';
function mir(x1, y1, x2, y2) {
  d += 'M' + x1.toFixed(1) + ' ' + y1.toFixed(1) + 'L' + x2.toFixed(1) + ' ' + y2.toFixed(1) + 'M' + (1250 - x1).toFixed(1) + ' ' + y1.toFixed(1) + 'L' + (1250 - x2).toFixed(1) + ' ' + y2.toFixed(1);
}
// Cells split in four as they get closer to an alignment peg.
function cell(x, y, s, n) {
  var cx = x + s / 2, cy = y + s / 2, m = 1e9;
  pegs.forEach(function (p) { m = Math.min(m, Math.max(Math.abs(cx - p[0]), Math.abs(cy - p[1]))); });
  var lim = [110, 84, 66][n];
  if (n < 3 && m < lim) {
    var h = s / 2;
    cell(x, y, h, n + 1); cell(x + h, y, h, n + 1); cell(x, y + h, h, n + 1); cell(x + h, y + h, h, n + 1);
    return;
  }
  var edge = x < 215 || y < 110 || y + s > 1015;
  if (edge) {
    var left = x < 215, top = y < 110;
    var px = left ? 210 : x + s * (.2 + .6 * rnd()), py = left ? y + s * (.3 + .4 * rnd()) : (top ? 101 : 1025);
    mir(px, py, x + s, top ? y + s : y);
    mir(px, py, left ? x + s : x, top ? y + s : (left ? y + s : y));
    if (left) mir(x + s, y, x + s, y + s);
    else mir(x, top ? y + s : y, x + s, top ? y + s : y);
    return;
  }
  mir(x, y, x + s, y); mir(x, y, x, y + s);
  var k = Math.round((x - 208) / s) + Math.round((y - 104) / s);
  if (k % 2) mir(x, y, x + s, y + s); else mir(x + s, y, x, y + s);
  if (n > 1 && rnd() > .6) { if (k % 2) mir(x + s, y, x, y + s); else mir(x, y, x + s, y + s); }
  else if (n < 2 && rnd() > .4) mir(x, y, x + s / 2, y + s);
}
for (var r = 0; r < 11; r++) for (var c = 0; c < 5; c++) cell(208.3 + 83.35 * c, 104.6 + 83.5 * r, 83.4, 0);
for (i = 0; i < 23; i++) {
  var yy = 95 + i * 41;
  mir(193, yy, 209, yy + 26); mir(209, yy + 26, 193, yy + 41);
}
for (i = 0; i < 10; i++) {
  var xx = 210 + i * 41;
  mir(xx, 91, xx + 22, 101); mir(xx + 22, 101, xx + 41, 91); mir(xx, 1036, xx + 22, 1025); mir(xx + 22, 1025, xx + 41, 1036);
}
for (i = 0; i < 48; i++) {
  a = i / 48 * 6.283;
  pegs.forEach(function (p) { mir(p[0] + 50 * Math.cos(a), p[1] + 50 * Math.sin(a), p[0] + (66 + 16 * rnd()) * Math.cos(a + .05), p[1] + (64 + 12 * rnd()) * Math.sin(a + .05)); });
}
[[376,438,425,380],[376,438,432,388],[376,438,440,450],[376,522,455,500],[376,522,445,478],[376,605,380,620],[376,605,430,618],[376,605,460,605],[458,605,483,575],
 [376,685,410,659],[376,685,400,659],[541,943,600,865],[541,943,560,865],[541,943,610,868],[541,943,520,865],[625,188,625,258],[541,188,560,258],[541,188,625,258],[625,188,690,258],[541,188,600,105],[625,188,590,105]].forEach(function (q) { mir(q[0], q[1], q[2], q[3]); });
path(F, d, '#000', 2.7, { opacity: .9 });
pegs.forEach(function (p) { fill(F, circle(p[0], p[1], 60) + circle(1250 - p[0] + 2, p[1], 60), '#000'); });
fill(F, 'M397 258H855L767 618H875V659H790L768 680 790 690 768 720V750L790 775 768 790V800L790 815 768 830V865L795 900 745 869H665L650 885 640 869 627 942 613 869 541 943 590 869H510L458 898 480 860V830L460 815 480 800V785L458 775 480 750V715L460 690 480 675V659H373V618H483z', '#000');
fill(F, 'M376 439L425 380 432 392zM874 439L825 380 818 392zM376 686L400 659H376zM874 686L850 659H874z', '#000');
d = '';
for (var x = 416; x < 832; x += (x > 470 && x < 780 ? 9 : 6.2)) d += 'M' + x.toFixed(1) + ' 624V654';
d += 'M846 624V654';
path(F, d, '#b4babf', 3.2);
path(F, 'M604 624V654M609 624V654M614 624V654M743 624V654M768 624V654', '#bfc4c8', 3);
for (x = 474; x <= 778; x += 5) {
  var u = Math.abs(x - 625) / 155, slant = (x - 625) * -.07;
  var y1 = 366 + u * u * 18, y2 = 522 - u * u * 36;
  path(F, 'M' + x + ' ' + y1 + 'L' + (x + slant) + ' ' + y2, '#b0b5ba', 2.2, { opacity: (.9 * (1 - u * .5)).toFixed(2), 'stroke-dasharray': u > .6 ? '3 3' : (u > .3 ? '9 2' : 'none') });
  path(F, 'M' + x + ' 264v7', '#8d9398', 2, { opacity: .7 });
}
for (x = 474; x <= 562; x += 6) {
  path(F, 'M' + x + ' 292V' + (324 + (x % 4) * 3) + 'M' + (1250 - x) + ' 292V' + (324 + (x % 4) * 3), '#8d9398', 2, { 'stroke-dasharray': '2 6', opacity: .65 });
}
[592, 610, 625, 641, 658].forEach(function (q) { path(F, 'M' + q + ' 268V366', '#8d9398', 2, { opacity: .75 }); });
path(F, 'M546 270V370M704 270V370', '#777', 2, { 'stroke-dasharray': '8 14' });
path(F, 'M480 382H770M480 442H770M490 502H760', '#000', 2.5);
path(F, 'M598 848l5 12M650 840l10-8M655 848l6-4M603 610v6M640 610v6', '#777', 2.5);

// Right view
var R = document.getElementById('vRight');
grid(R, 0, 0, 76, 1143 - 792, 26.25, '#8b939c', .6);
grid(R, 0, 0, 76, 1143 - 792, 262.5, '#7d828b', .9);
path(R, 'M132 914V1026H240', '#666b70', 3);
label(R, 140, 918, 'z'); label(R, 252, 1022, 'y');
```
